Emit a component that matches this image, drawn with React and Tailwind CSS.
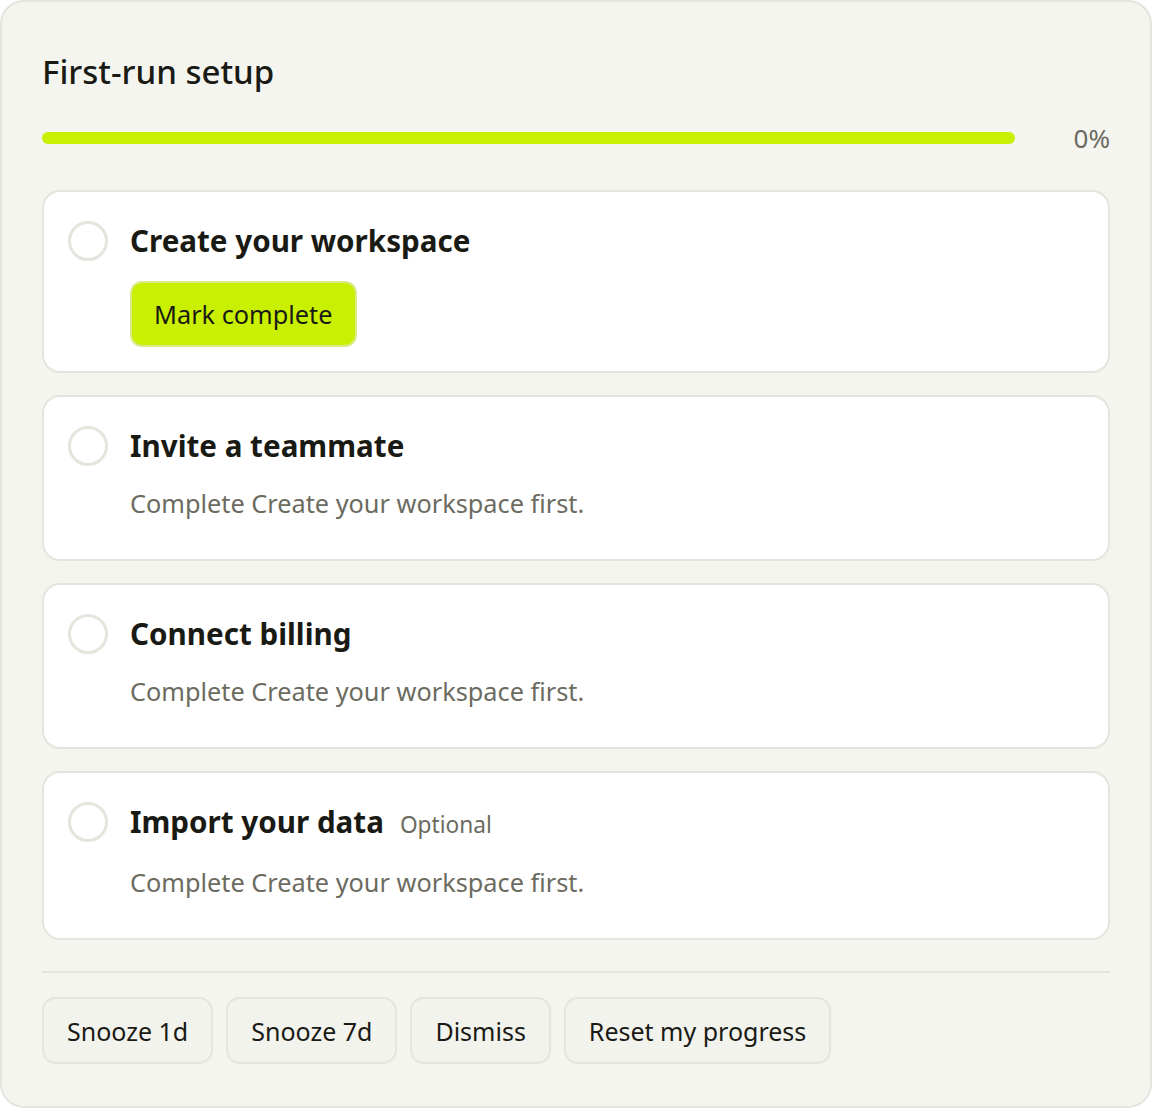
import React from "react";

const F = { fontFamily: '"Noto Sans", "Open Sans", sans-serif' };

function Circle() {
  return <div className="mt-[5px] h-[40px] w-[40px] shrink-0 rounded-full border-[3px] border-[#e5e5de]" />;
}

function Card({ title, optional, children }) {
  return (
    <div className="rounded-[18px] border-2 border-[#e5e5de] bg-white px-[24px] pt-[24px] pb-[24px]">
      <div className="flex items-start gap-[22px]">
        <Circle />
        <div className="flex flex-col items-start">
          <div className="flex items-baseline gap-[16px]">
            <span className="text-[29.6px] font-bold leading-[50px] text-[#1a1a14]">{title}</span>
            {optional && <span className="text-[22.7px] leading-[50px] text-[#6b6b60]">Optional</span>}
          </div>
          {children}
        </div>
      </div>
    </div>
  );
}

function Desc() {
  return <p className="py-[14px] text-[25.3px] leading-[36px] text-[#6b6b60]">Complete Create your workspace first.</p>;
}

export default function App() {
  const btns = ["Snooze 1d", "Snooze 7d", "Dismiss", "Reset my progress"];
  return (
    <div style={F} className="h-[1108px] w-[1152px] rounded-[24px] border-2 border-[#e5e5de] bg-[#f5f5f0] px-[40px] pt-[43px] pb-[40px]">
      <h1 className="text-[33px] font-medium leading-[54px] text-[#1a1a14]">First-run setup</h1>
      <div className="mt-[21px] flex items-center">
        <div className="h-[12px] flex-1 rounded-full bg-[#c8f000]" />
        <span className="ml-[59px] text-[26px] leading-[36px] text-[#6b6b60]">0%</span>
      </div>
      <div className="mt-[34px] flex flex-col gap-[22px]">
        <Card title="Create your workspace">
          <button className="mt-[15px] h-[66px] rounded-[12px] border-2 border-[#dbe98a] bg-[#c8f000] px-[22px] text-[25.3px] leading-[36px] text-[#1a1a14]">
            Mark complete
          </button>
        </Card>
        <Card title="Invite a teammate"><Desc /></Card>
        <Card title="Connect billing"><Desc /></Card>
        <Card title="Import your data" optional><Desc /></Card>
      </div>
      <div className="mt-[31px] h-[2px] bg-[#e5e5de]" />
      <div className="mt-[24px] flex gap-[13px]">
        {btns.map((b) => (
          <button key={b} className="h-[67px] rounded-[14px] border-2 border-[#e5e5de] bg-[#f3f3ee] px-[23px] text-[25px] leading-[36px] text-[#1a1a14]">
            {b}
          </button>
        ))}
      </div>
    </div>
  );
}
